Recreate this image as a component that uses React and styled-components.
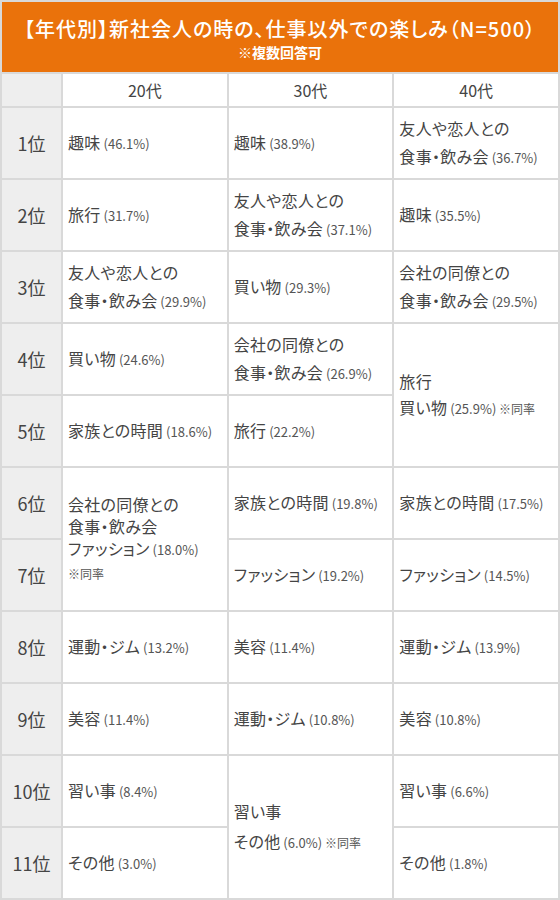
import React from "react";
import styled, { createGlobalStyle } from "styled-components";

const Global = createGlobalStyle`
  html, body { margin: 0; padding: 0; background: #fff; }
  body {
    font-family: "Noto Sans CJK JP", "Noto Sans", sans-serif;
    font-feature-settings: "palt";
  }
`;

const Frame = styled.div`
  width: 560px;
  box-sizing: border-box;
  background: #d9d9d9;
  padding: 2px;
  display: grid;
  grid-template-columns: 59px 1fr 1fr 1fr;
  grid-template-rows: 70px 32px repeat(11, 70px);
  gap: 2px;
`;

const Title = styled.div`
  grid-column: 1 / -1;
  background: #ea720b;
  color: #fff;
  display: flex;
  flex-direction: column;
  align-items: center;
  justify-content: center;
  font-weight: 500;
  font-size: 20px;
  line-height: 29px;
  letter-spacing: 1px;
  small {
    font-size: 14px;
    line-height: 18px;
    font-weight: 700;
    letter-spacing: 0;
  }
`;

const Corner = styled.div`
  background: #eeeeee;
`;

const HeadCell = styled.div`
  background: #fff;
  color: #444;
  font-size: 16px;
  display: flex;
  align-items: center;
  justify-content: center;
`;

const Rank = styled.div`
  background: #eeeeee;
  color: #444;
  font-size: 18px;
  font-weight: 400;
  display: flex;
  align-items: center;
  justify-content: center;
  grid-row: ${(p) => p.$row};
  grid-column: 1;
`;

const Cell = styled.div`
  background: #fff;
  color: #444;
  font-size: 16px;
  letter-spacing: 0.3px;
  line-height: ${(p) => p.$lh || 28}px;
  padding: 0 5px;
  display: flex;
  flex-direction: column;
  justify-content: center;
  grid-column: ${(p) => p.$col};
  grid-row: ${(p) => p.$row};
  white-space: nowrap;
`;

const Pct = styled.span`
  font-size: 13px;
  letter-spacing: 0;
  color: #555;
`;

const Note = styled.span`
  font-size: 12px;
  letter-spacing: 0;
  color: #555;
`;

const Line = styled.div``;

const cells = [
  // 20代
  { col: 2, row: 3, lines: [["趣味", "46.1%"]] },
  { col: 2, row: 4, lines: [["旅行", "31.7%"]] },
  { col: 2, row: 5, lines: [["友人や恋人との"], ["食事・飲み会", "29.9%"]] },
  { col: 2, row: 6, lines: [["買い物", "24.6%"]] },
  { col: 2, row: 7, lines: [["家族との時間", "18.6%"]] },
  {
    col: 2,
    row: "8 / span 2",
    lh: 22,
    lines: [["会社の同僚との"], ["食事・飲み会"], ["ファッション", "18.0%"]],
    note: "block",
  },
  { col: 2, row: 10, lines: [["運動・ジム", "13.2%"]] },
  { col: 2, row: 11, lines: [["美容", "11.4%"]] },
  { col: 2, row: 12, lines: [["習い事", "8.4%"]] },
  { col: 2, row: 13, lines: [["その他", "3.0%"]] },
  // 30代
  { col: 3, row: 3, lines: [["趣味", "38.9%"]] },
  { col: 3, row: 4, lines: [["友人や恋人との"], ["食事・飲み会", "37.1%"]] },
  { col: 3, row: 5, lines: [["買い物", "29.3%"]] },
  { col: 3, row: 6, lines: [["会社の同僚との"], ["食事・飲み会", "26.9%"]] },
  { col: 3, row: 7, lines: [["旅行", "22.2%"]] },
  { col: 3, row: 8, lines: [["家族との時間", "19.8%"]] },
  { col: 3, row: 9, lines: [["ファッション", "19.2%"]] },
  { col: 3, row: 10, lines: [["美容", "11.4%"]] },
  { col: 3, row: 11, lines: [["運動・ジム", "10.8%"]] },
  { col: 3, row: "12 / span 2", lh: 30, lines: [["習い事"], ["その他", "6.0%"]], note: "inline" },
  // 40代
  { col: 4, row: 3, lines: [["友人や恋人との"], ["食事・飲み会", "36.7%"]] },
  { col: 4, row: 4, lines: [["趣味", "35.5%"]] },
  { col: 4, row: 5, lines: [["会社の同僚との"], ["食事・飲み会", "29.5%"]] },
  { col: 4, row: "6 / span 2", lh: 26, lines: [["旅行"], ["買い物", "25.9%"]], note: "inline" },
  { col: 4, row: 8, lines: [["家族との時間", "17.5%"]] },
  { col: 4, row: 9, lines: [["ファッション", "14.5%"]] },
  { col: 4, row: 10, lines: [["運動・ジム", "13.9%"]] },
  { col: 4, row: 11, lines: [["美容", "10.8%"]] },
  { col: 4, row: 12, lines: [["習い事", "6.6%"]] },
  { col: 4, row: 13, lines: [["その他", "1.8%"]] },
];

export default function App() {
  return (
    <>
      <Global />
      <Frame>
        <Title>
          <div>【年代別】新社会人の時の、仕事以外での楽しみ（N=500）</div>
          <small>※複数回答可</small>
        </Title>
        <Corner />
        <HeadCell>20代</HeadCell>
        <HeadCell>30代</HeadCell>
        <HeadCell>40代</HeadCell>
        {Array.from({ length: 11 }, (_, i) => (
          <Rank key={i} $row={i + 3}>
            {i + 1}位
          </Rank>
        ))}
        {cells.map((c, i) => (
          <Cell key={i} $col={c.col} $row={c.row} $lh={c.lh}>
            {c.lines.map(([t, p], j) => (
              <Line key={j}>
                {t}
                {p && <Pct> ({p})</Pct>}
                {c.note === "inline" && j === c.lines.length - 1 && <Note> ※同率</Note>}
              </Line>
            ))}
            {c.note === "block" && (
              <Line>
                <Note>※同率</Note>
              </Line>
            )}
          </Cell>
        ))}
      </Frame>
    </>
  );
}
